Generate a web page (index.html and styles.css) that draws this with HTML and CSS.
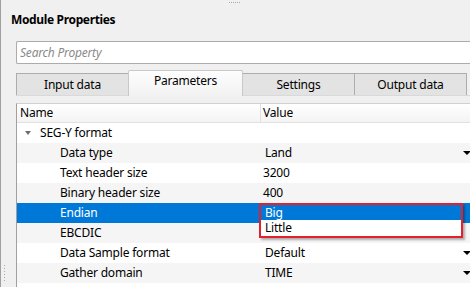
FILE: index.html
```html
<!DOCTYPE html>
<html lang="en">
  <head>
    <meta charset="UTF-8" />
    <title>Module Properties</title>
    <link rel="stylesheet" href="styles.css">
  </head>
  <body>
    <div class="panel">
      <div class="grip-top"></div>
      <h1 class="title">Module Properties</h1>
      <div class="search">
        <input type="text" placeholder="Search Property" />
      </div>

      <div class="tabs">
        <div class="tab">Input data</div>
        <div class="tab active">Parameters</div>
        <div class="tab">Settings</div>
        <div class="tab">Output data</div>
      </div>

      <div class="pane">
        <div class="tree">
          <div class="row head">
            <div class="cell name">Name</div>
            <div class="cell value">Value</div>
          </div>
          <div class="row">
            <div class="cell name group"><span class="caret"></span>SEG-Y format</div>
            <div class="cell value"></div>
          </div>
          <div class="row alt">
            <div class="cell name child">Data type</div>
            <div class="cell value combo">Land<span class="arrow"></span></div>
          </div>
          <div class="row">
            <div class="cell name child">Text header size</div>
            <div class="cell value">3200</div>
          </div>
          <div class="row alt">
            <div class="cell name child">Binary header size</div>
            <div class="cell value">400</div>
          </div>
          <div class="row selected">
            <div class="cell name child">Endian</div>
            <div class="cell value combo">
              <div class="popup">
                <div class="option current">Big</div>
                <div class="option">Little</div>
              </div>
            </div>
          </div>
          <div class="row alt">
            <div class="cell name child">EBCDIC</div>
            <div class="cell value"></div>
          </div>
          <div class="row">
            <div class="cell name child">Data Sample format</div>
            <div class="cell value combo">Default<span class="arrow"></span></div>
          </div>
          <div class="row alt">
            <div class="cell name child">Gather domain</div>
            <div class="cell value combo">TIME<span class="arrow"></span></div>
          </div>
        </div>
      </div>
      <div class="grip-side"></div>
    </div>
  </body>
</html>
```

FILE: styles.css
```css
body {
  margin: 0;
  width: 470px;
  height: 287px;
  overflow: hidden;
  font-family: "Noto Sans", "Open Sans", sans-serif;
  font-size: 12px;
  letter-spacing: -0.2px;
  color: #000;
  background-color: #f0f0f0;
}
.panel {
  position: relative;
  height: 287px;
  border-left: 1px solid #a0a0a0;
  box-sizing: border-box;
  display: flex;
  flex-direction: column;
}
.grip-top {
  align-self: center;
  width: 12px;
  height: 1px;
  margin-top: 2px;
  margin-left: -2px;
  background: repeating-linear-gradient(90deg, #a8a8a8 0 1px, transparent 1px 2px);
}
.title {
  margin: 9px 0 0 10px;
  font-size: 12px;
  line-height: 16px;
  font-weight: 700;
  letter-spacing: -0.35px;
}
.search {
  margin: 13px 0 0 15px;
}
.search input {
  display: block;
  width: 470px;
  height: 23px;
  box-sizing: border-box;
  border: 1px solid #acacac;
  border-right: none;
  border-radius: 2px 0 0 2px;
  padding: 0 3px;
  font-family: inherit;
  font-size: 12px;
  letter-spacing: -0.2px;
  background: #fff;
}
.search input::placeholder {
  color: #8a8a8a;
  font-style: italic;
}

.tabs {
  display: flex;
  align-items: flex-end;
  margin: 6px 0 0 15px;
  height: 26px;
  border-bottom: 1px solid #d9d9d9;
  box-sizing: border-box;
}
.tab {
  width: 113px;
  height: 22px;
  line-height: 21px;
  text-align: center;
  background: #e3e3e3;
  border: 1px solid #adadad;
  border-bottom: none;
  box-sizing: border-box;
  margin-right: -1px;
}
.tab.active {
  width: 115px;
  height: 26px;
  line-height: 19px;
  background: linear-gradient(#fdfdfd, #f2f2f2);
  border-color: #c8c8c8;
  border-radius: 2px 2px 0 0;
  position: relative;
  z-index: 1;
  margin-bottom: -1px;
}

.pane {
  flex: 1;
  padding: 7px 0 0 15px;
  min-height: 0;
}
.tree {
  height: 100%;
  background: #fff;
  border-left: 1px solid #a0a0a0;
  border-top: 1px solid #d0d0d0;
  width: 470px;
}
.row {
  display: grid;
  grid-template-columns: 243px 1fr;
  height: 20px;
  line-height: 20px;
}
.row.alt {
  background: #f5f5f5;
}
.row.selected {
  background: #0078d7;
  color: #fff;
}
.row.head {
  height: 19px;
  line-height: 18px;
  background: linear-gradient(#fff, #f4f4f4);
  border-bottom: 1px solid #e0e0e0;
  box-sizing: border-box;
}
.head .value {
  border-left: 1px solid #e0e0e0;
  padding-left: 2px;
}
.cell {
  white-space: nowrap;
  position: relative;
}
.name {
  padding-left: 3px;
}
.name.group {
  padding-left: 23px;
}
.name.child {
  padding-left: 43px;
}
.caret {
  position: absolute;
  left: 8px;
  top: 8px;
  border-left: 3px solid transparent;
  border-right: 3px solid transparent;
  border-top: 4px solid #6d6d6d;
}
.value {
  padding-left: 3px;
}
.value.combo {
  padding-left: 5px;
}
.arrow {
  position: absolute;
  left: 203px;
  top: 8px;
  border-left: 4px solid transparent;
  border-right: 4px solid transparent;
  border-top: 4px solid #000;
}

.popup {
  position: absolute;
  left: -1px;
  top: 0;
  width: 204px;
  border: 2px solid #e3202b;
  background: #fff;
  color: #000;
  box-shadow: 2px 2px 2px rgba(0, 0, 0, 0.3);
  z-index: 2;
  box-sizing: border-box;
}
.option {
  height: 16px;
  line-height: 15px;
  padding-left: 4px;
}
.option.current {
  height: 15px;
  background: #0078d7;
  color: #fff;
}

.grip-side {
  position: absolute;
  left: 3px;
  top: 265px;
  width: 1px;
  height: 17px;
  background: repeating-linear-gradient(#a8a8a8 0 1px, transparent 1px 3px);
}
```
